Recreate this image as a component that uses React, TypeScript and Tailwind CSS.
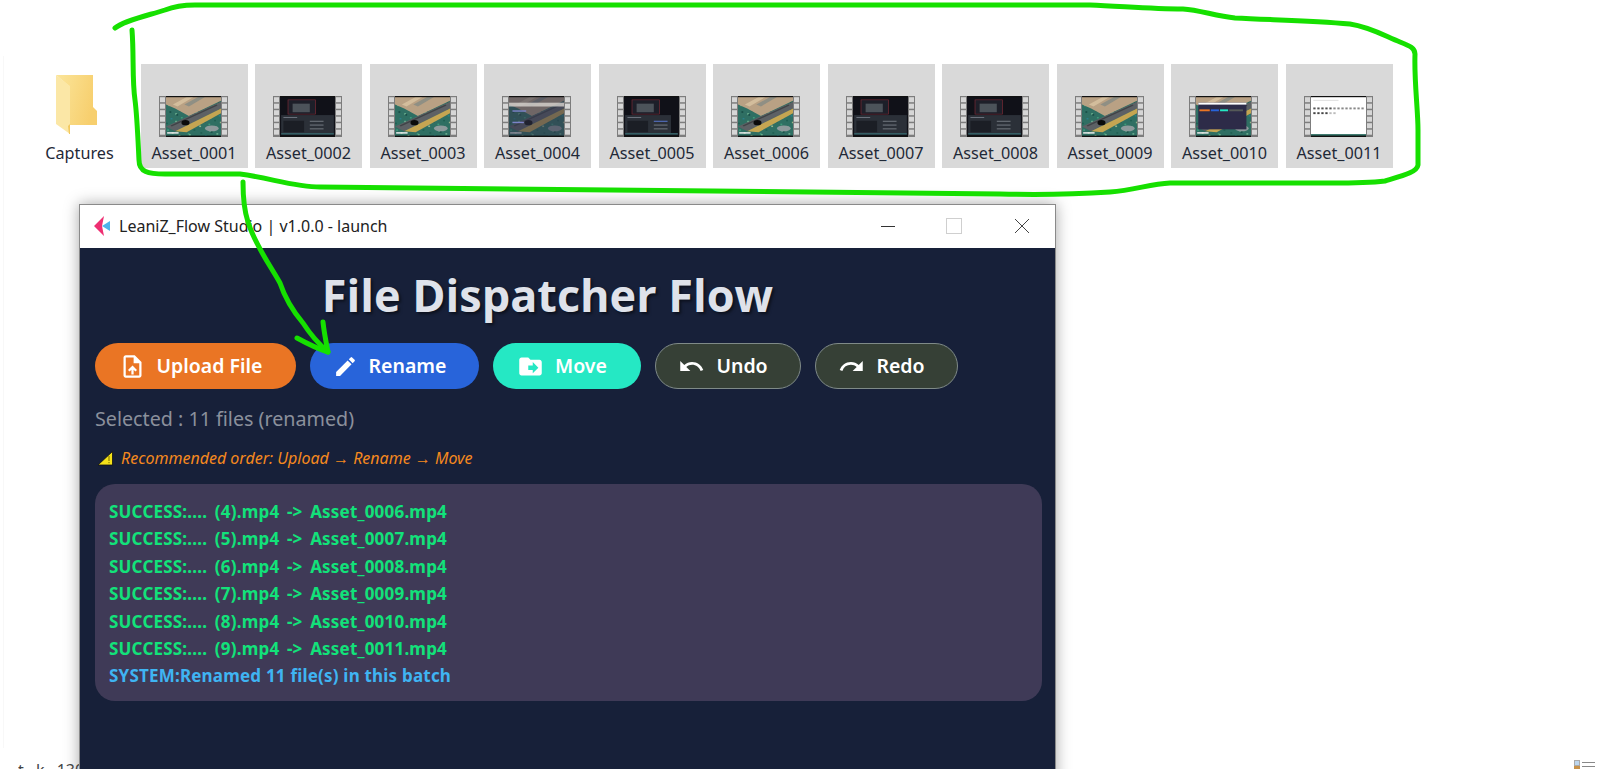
import React from "react";
import { MdOutlineUploadFile, MdEdit, MdDriveFileMove, MdUndo, MdRedo } from "react-icons/md";

const sans = "font-['Noto_Sans','Open_Sans',sans-serif]";

const speckColors = ["#1f5f52", "#3f9a7a", "#6cb08e", "#174a44", "#2a7f8a", "#9ab58a"];
const specks = Array.from({ length: 70 }).map((_, i) => {
  const a = (i * 37) % 48;
  const b = (i * 23 + (i % 7) * 5) % 41;
  return { x: a, y: b, c: speckColors[i % speckColors.length] };
});

function Picture({ kind }: { kind: string }) {
  if (kind === "aerial" || kind === "aerialFaded" || kind === "app") {
    return (
      <>
        <rect width="48" height="41" fill="#2f6f63" />
        {specks.map((s, i) => (
          <rect key={i} x={s.x} y={s.y} width="1.6" height="1.6" fill={s.c} />
        ))}
        <polygon points="0,0 48,0 48,4 20,20 8,12 0,8" fill="#b9a184" />
        <polygon points="18,0 24,0 10,10 6,8" fill="#d3bd9c" />
        <polygon points="28,0 34,0 20,10 16,8" fill="#8f8f84" />
        <polygon points="0,31 48,5 48,12 8,36" fill="#5d6165" />
        <polygon points="4,30 44,8 45,9 5,31" fill="#3f4347" />
        <polygon points="8,36 48,12 48,17 18,37" fill="#c5a552" />
        <ellipse cx="40" cy="33" rx="6" ry="3" fill="#8e9a9c" />
        <ellipse cx="17" cy="27" rx="3.5" ry="2.8" fill="#0b0b0b" />
        <rect x="1" y="37" width="10" height="1.5" fill="#f2f2f2" />
        {kind === "aerialFaded" && (
          <>
            <rect width="48" height="41" fill="#33374f" opacity="0.55" />
            <rect y="6" width="48" height="4" fill="#d8d4cf" opacity="0.8" />
            <rect x="3" y="14" width="12" height="1.5" fill="#7c83c8" />
            <rect x="3" y="26" width="10" height="1.5" fill="#7c83c8" />
          </>
        )}
        {kind === "app" && (
          <>
            <rect x="2" y="6" width="42" height="28" fill="#2d2b48" />
            <rect x="2" y="6" width="42" height="2" fill="#ffffff" />
            <rect x="3" y="13" width="9" height="2" fill="#ea7524" />
            <rect x="13" y="13" width="7" height="2" fill="#2864da" />
            <rect x="21" y="13" width="7" height="2" fill="#25e8c4" />
            <rect x="29" y="13" width="12" height="2" fill="#555a58" />
          </>
        )}
      </>
    );
  }
  if (kind === "doc") {
    return (
      <>
        <rect width="48" height="41" fill="#ffffff" />
        <rect y="39" width="48" height="2" fill="#2f6f63" />
        {Array.from({ length: 13 }).map((_, i) => (
          <rect key={i} x={2 + i * 3.5} y="11" width="2" height="2" fill={i < 5 ? "#555" : "#888"} />
        ))}
        {Array.from({ length: 6 }).map((_, i) => (
          <rect key={i} x={2 + i * 3.5} y="16" width="2" height="2" fill={i < 4 ? "#444" : "#bbb"} />
        ))}
        <rect x="2" y="3" width="22" height="1" fill="#ddd" />
      </>
    );
  }
  const wide = kind === "dark5";
  return (
    <>
      <rect width="48" height="41" fill="#101118" />
      <rect x="7" y="3" width="24" height="15" fill="#1d1f29" stroke="#7c2a35" strokeWidth="0.6" />
      <rect x="11" y="7" width="15" height="9" fill="#4c535a" />
      <rect x="1" y="19" width={wide ? 40 : 46} height="19" fill="#2b3038" />
      <rect x="3" y="21" width="12" height="1" fill="#6f7680" />
      <rect x="3" y="25" width="18" height="12" fill="#1b1e25" />
      <rect x="26" y="25" width="12" height="1" fill={wide ? "#5a7bd8" : "#767c84"} />
      <rect x="26" y="29" width="12" height="1" fill="#767c84" />
      <rect x="26" y="33" width="12" height="1" fill="#767c84" />
      <rect x="1" y="38" width="46" height="1.5" fill="#3c6b70" />
    </>
  );
}

function Thumb({ kind }: { kind: string }) {
  const holes = [1.2, 7.7, 14.2, 20.7, 27.2, 33.7];
  return (
    <svg width="69" height="41" viewBox="0 0 69 41" className="block">
      <rect width="69" height="41" fill="#7d7d7d" />
      {holes.map((y) => (
        <React.Fragment key={y}>
          <rect x="1" y={y} width="5" height="5" fill="#d6d6d6" />
          <rect x="63" y={y} width="5" height="5" fill="#d6d6d6" />
        </React.Fragment>
      ))}
      <svg x="7" y="1" width="55" height="39" viewBox="0 0 48 41" preserveAspectRatio="none">
        <Picture kind={kind} />
      </svg>
      <rect x="7" y="0" width="55" height="1.2" fill="#111" />
      <rect x="7" y="39.6" width="55" height="1.4" fill="#111" />
    </svg>
  );
}

const assets = [
  ["Asset_0001", "aerial"],
  ["Asset_0002", "dark"],
  ["Asset_0003", "aerial"],
  ["Asset_0004", "aerialFaded"],
  ["Asset_0005", "dark5"],
  ["Asset_0006", "aerial"],
  ["Asset_0007", "dark"],
  ["Asset_0008", "dark"],
  ["Asset_0009", "aerial"],
  ["Asset_0010", "app"],
  ["Asset_0011", "doc"],
];

const logLines = [
  "SUCCESS:.... (4).mp4 -> Asset_0006.mp4",
  "SUCCESS:.... (5).mp4 -> Asset_0007.mp4",
  "SUCCESS:.... (6).mp4 -> Asset_0008.mp4",
  "SUCCESS:.... (7).mp4 -> Asset_0009.mp4",
  "SUCCESS:.... (8).mp4 -> Asset_0010.mp4",
  "SUCCESS:.... (9).mp4 -> Asset_0011.mp4",
];

function Folder() {
  return (
    <svg width="41" height="61" viewBox="0 0 41 61" className="block">
      <defs>
        <linearGradient id="fb" x1="0" y1="0" x2="1" y2="0.3">
          <stop offset="0" stopColor="#fbe59a" />
          <stop offset="1" stopColor="#f7cf6e" />
        </linearGradient>
      </defs>
      <polygon points="0,1 37,1 37,33 41,37 41,51 13,51 13,12" fill="url(#fb)" />
      <polygon points="0,1 14,12 14,60 0,50" fill="#fbe7a6" />
      <polygon points="14,12 14,60 13,60 12,52 14,50" fill="#f3c95f" />
    </svg>
  );
}

function Btn({
  icon,
  label,
  cls,
}: {
  icon: React.ReactNode;
  label: string;
  cls: string;
}) {
  return (
    <button className={`flex h-[46px] items-center justify-center gap-[11px] rounded-full pr-[10px] text-[19.5px] font-semibold text-white ${cls}`}>
      {icon}
      <span>{label}</span>
    </button>
  );
}

export default function App() {
  return (
    <div className={`relative h-[769px] w-[1600px] overflow-hidden bg-white ${sans}`}>
      <div className="absolute bottom-[21px] left-[3px] top-[56px] w-px bg-[#f8f8f8]" />

      <div className="flex gap-[7.5px] pl-[26px] pt-[64px]">
        <div className="flex h-[104px] w-[107px] flex-col items-center">
          <div className="mt-[10px] pr-[6px]">
            <Folder />
          </div>
          <span className="mt-[8px] text-[16.2px] leading-[20px] text-[#1f2937]">Captures</span>
        </div>
        {assets.map(([name, kind]) => (
          <div key={name} className="flex h-[104px] w-[107px] flex-col items-center bg-[#d9d9d9] pt-[32px]">
            <div className="pr-[2px]">
              <Thumb kind={kind} />
            </div>
            <span className="mt-[6px] text-[16.2px] leading-[20px] text-[#1f2937]">{name}</span>
          </div>
        ))}
      </div>

      <div className="ml-[79px] mt-[36px] h-[600px] w-[977px] border border-b-0 border-[#8a8a8a] bg-[#172039] shadow-[0_0_14px_rgba(0,0,0,0.35)]">
        <div className="flex h-[43px] items-center bg-white pb-[1px] pl-[13px] text-[#222]">
          <svg width="18" height="20" viewBox="0 0 18 20">
            <polygon points="11,0 1,10 11,20 9,10" fill="#ee2f72" />
            <polygon points="9,10 17,5 17,15" fill="#4db4ea" />
          </svg>
          <span className="ml-[8px] text-[16px]">LeaniZ_Flow Studio | v1.0.0 - launch</span>
          <div className="ml-auto flex items-center">
            <svg width="16" height="16" viewBox="0 0 16 16" className="mr-[50px]">
              <rect x="1" y="8" width="14" height="1" fill="#333" />
            </svg>
            <svg width="16" height="16" viewBox="0 0 16 16" className="mr-[52px]">
              <rect x="0.5" y="0.5" width="15" height="15" fill="none" stroke="#cfcfcf" />
            </svg>
            <svg width="16" height="16" viewBox="0 0 16 16" className="mr-[25px]">
              <path d="M1 1 L15 15 M15 1 L1 15" stroke="#444" strokeWidth="1" />
            </svg>
          </div>
        </div>

        <div className="px-[15px]">
          <h1 className="mt-[17px] pr-[40px] text-center font-['Open_Sans','Noto_Sans',sans-serif] text-[45px] font-bold leading-[60px] text-[#dfe2ea] [text-shadow:2px_2px_3px_rgba(0,0,0,0.5)]">
            File Dispatcher Flow
          </h1>

          <div className="mt-[18px] flex gap-[14px]">
            <Btn cls="w-[201px] bg-[#ea7524]" label="Upload File" icon={<MdOutlineUploadFile size={27} />} />
            <Btn cls="w-[169px] bg-[#2864da]" label="Rename" icon={<MdEdit size={25} />} />
            <Btn cls="w-[148px] bg-[#25e8c4]" label="Move" icon={<MdDriveFileMove size={27} />} />
            <Btn cls="w-[146px] border border-[#7f8a88] bg-[#364036]" label="Undo" icon={<MdUndo size={27} />} />
            <Btn cls="w-[143px] border border-[#7f8a88] bg-[#364036]" label="Redo" icon={<MdRedo size={27} />} />
          </div>

          <p className="mt-[17px] text-[19.7px] leading-[26px] text-[#8b909c]">Selected : 11 files (renamed)</p>

          <div className="mt-[14px] flex h-[24px] items-center">
            <svg width="17" height="15" viewBox="0 0 17 15" className="ml-[2px]">
              <polygon points="15.5,0.5 15.5,14 1,14" fill="#f5e21a" stroke="#111" strokeWidth="0.8" />
              <rect x="11.5" y="5" width="1" height="5" fill="#7a6a00" />
              <rect x="11.5" y="11" width="1" height="1.2" fill="#7a6a00" />
            </svg>
            <span className="ml-[7px] text-[16px] italic text-[#f5891e]">
              Recommended order: Upload → Rename → Move
            </span>
          </div>

          <div className="mt-[14px] h-[217px] w-[947px] rounded-[20px] bg-[#3f3a57] pl-[14px] pr-[15px] pt-[14px] text-[17px] font-bold leading-[27.4px] tracking-[0.2px]">
            {logLines.map((l) => (
              <div key={l} className="text-[#12e27a] [word-spacing:3px]">{l}</div>
            ))}
            <div className="text-[#3fb4f2]">SYSTEM:Renamed 11 file(s) in this batch</div>
          </div>
        </div>
      </div>

      <span className="absolute left-[18px] top-[762px] w-[61px] overflow-hidden whitespace-nowrap text-[16px] leading-[16px] text-[#444] [word-spacing:8px]">t k 130</span>
      <div className="absolute left-[1574px] top-[760px] flex gap-[2px]">
        <div className="flex flex-col">
          <div className="h-[6px] w-[6px] border border-[#aaa] bg-[#bcd6ee]" />
          <div className="h-[3px] w-[6px] bg-[#c8924a]" />
        </div>
        <div className="flex flex-col gap-[3px] pt-[2px]">
          <div className="h-px w-[13px] bg-[#888]" />
          <div className="h-px w-[13px] bg-[#888]" />
        </div>
      </div>

      <svg className="pointer-events-none absolute left-0 top-0" width="1600" height="769" fill="none" stroke="#16e000" strokeWidth="5" strokeLinecap="round" strokeLinejoin="round">
        <path d="M115 28 C125 20 150 15 165 10 C175 6 182 5 195 5 L1090 5 C1120 6 1150 9 1183 9 C1200 10 1215 16 1235 18 C1270 20 1310 20 1350 24 C1370 27 1385 36 1400 42 C1410 46 1415 48 1415 54 C1414 80 1418 110 1418 130 L1418 165 C1417 172 1405 175 1385 181 C1360 184 1340 183 1300 183 L1170 183 C1150 184 1135 190 1110 192 C1080 194 1040 195 1000 194 L320 187 C295 187 270 178 240 174 L165 174 C148 174 139 172 139 160 C138 140 137 115 135 100 C132 80 134 55 132 30" />
        <path d="M243 182 C243 195 244 210 248 222 C255 245 270 265 280 283 C285 298 292 310 303 323 C312 337 320 345 328 352" />
        <path d="M297 338 C308 344 318 349 328 352 C326 342 324 332 323 322" />
      </svg>
    </div>
  );
}
